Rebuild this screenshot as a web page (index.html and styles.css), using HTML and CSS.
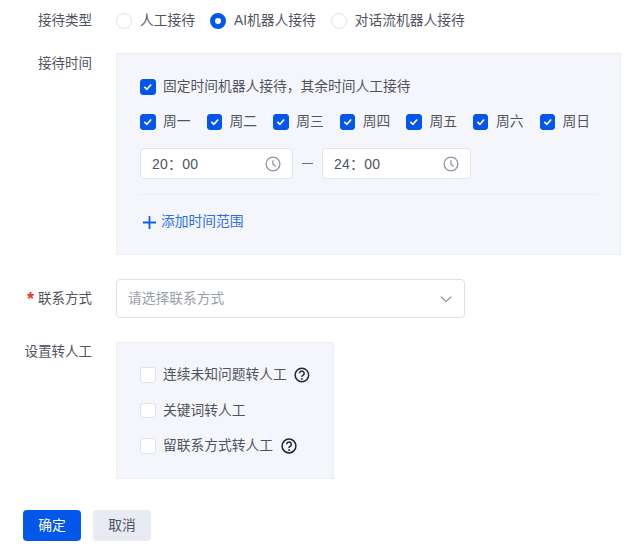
FILE: index.html
```html
<!DOCTYPE html>
<html lang="zh">
<head>
<meta charset="utf-8">
<title>接待设置</title>
<link rel="stylesheet" href="styles.css">
</head>
<body>
<form class="form">
  <div class="row row-type">
    <div class="label">接待类型</div>
    <div class="radios">
      <span class="opt"><i class="radio"></i>人工接待</span>
      <span class="opt"><i class="radio on"></i>AI机器人接待</span>
      <span class="opt"><i class="radio"></i>对话流机器人接待</span>
    </div>
  </div>
  <div class="row row-time">
    <div class="label">接待时间</div>
    <div class="panel panel-time">
      <span class="opt"><i class="check on"><svg viewBox="0 0 16 16"><path d="M4 8.2l3 2.8 5-5.6"/></svg></i>固定时间机器人接待，其余时间人工接待</span>
      <div class="days">
        <span class="opt"><i class="check on"><svg viewBox="0 0 16 16"><path d="M4 8.2l3 2.8 5-5.6"/></svg></i>周一</span>
        <span class="opt"><i class="check on"><svg viewBox="0 0 16 16"><path d="M4 8.2l3 2.8 5-5.6"/></svg></i>周二</span>
        <span class="opt"><i class="check on"><svg viewBox="0 0 16 16"><path d="M4 8.2l3 2.8 5-5.6"/></svg></i>周三</span>
        <span class="opt"><i class="check on"><svg viewBox="0 0 16 16"><path d="M4 8.2l3 2.8 5-5.6"/></svg></i>周四</span>
        <span class="opt"><i class="check on"><svg viewBox="0 0 16 16"><path d="M4 8.2l3 2.8 5-5.6"/></svg></i>周五</span>
        <span class="opt"><i class="check on"><svg viewBox="0 0 16 16"><path d="M4 8.2l3 2.8 5-5.6"/></svg></i>周六</span>
        <span class="opt"><i class="check on"><svg viewBox="0 0 16 16"><path d="M4 8.2l3 2.8 5-5.6"/></svg></i>周日</span>
      </div>
      <div class="times">
        <div class="time time-a"><span>20：00</span><svg class="clock" viewBox="0 0 16 16"><circle cx="8" cy="8" r="6.9"/><path d="M8 4.2V8.2l2.6 2.4"/></svg></div>
        <span class="dash"></span>
        <div class="time time-b"><span>24：00</span><svg class="clock" viewBox="0 0 16 16"><circle cx="8" cy="8" r="6.9"/><path d="M8 4.2V8.2l2.6 2.4"/></svg></div>
      </div>
      <div class="divider"></div>
      <div class="add"><svg viewBox="0 0 16 16"><path d="M8 1v14M1 8h14"/></svg>添加时间范围</div>
    </div>
  </div>
  <div class="row row-contact">
    <div class="label"><em>*</em>联系方式</div>
    <div class="select"><span>请选择联系方式</span><svg viewBox="0 0 12 12"><path d="M.8 3.6L6 8.6l5.2-5"/></svg></div>
  </div>
  <div class="row row-transfer">
    <div class="label">设置转人工</div>
    <div class="panel panel-transfer">
      <span class="opt"><i class="check"></i>连续未知问题转人工<svg class="help" viewBox="0 0 16 16"><circle cx="8" cy="8" r="6.9"/><path d="M5.7 6.3a2.3 2.3 0 1 1 3.6 1.9c-.9.5-1.3 1-1.3 1.8"/><circle class="dot" cx="8" cy="12" r=".9"/></svg></span>
      <span class="opt"><i class="check"></i>关键词转人工</span>
      <span class="opt"><i class="check"></i>留联系方式转人工<svg class="help" viewBox="0 0 16 16"><circle cx="8" cy="8" r="6.9"/><path d="M5.7 6.3a2.3 2.3 0 1 1 3.6 1.9c-.9.5-1.3 1-1.3 1.8"/><circle class="dot" cx="8" cy="12" r=".9"/></svg></span>
    </div>
  </div>
  <div class="actions">
    <button type="button" class="btn primary">确定</button>
    <button type="button" class="btn">取消</button>
  </div>
</form>
</body>
</html>
```
FILE: styles.css
```css
* { box-sizing: border-box; }
html, body { margin: 0; padding: 0; background: #fff; }
body {
  font-family: "Helvetica Neue", "Liberation Sans", "Noto Sans CJK SC", sans-serif;
  font-size: 13.75px;
  line-height: 20px;
  color: #50545e;
  width: 632px;
  height: 557px;
  overflow: hidden;
}
.form { padding-top: 11px; }
.row { display: flex; gap: 24px; }
.label { width: 92px; flex: none; text-align: right; color: #50545e; white-space: nowrap; font-size: 13.5px; }
.label em { color: #e8352e; font-style: normal; font-weight: 700; font-size: 18px; line-height: 16px; margin-right: 4px; vertical-align: -2px; }
.opt { display: flex; align-items: center; white-space: nowrap; }
.radios { display: flex; gap: 15px; }
.radio {
  width: 16px; height: 16px; border-radius: 50%; margin-right: 8px; flex: none;
  border: 1px solid #dfe3ef; background: #fff;
}
.radio.on { border: 5px solid #0256ea; }
.row-time { margin-top: 22px; }
.row-time .label { padding-top: 1px; }
.panel { background: #f5f6fb; border: 1px solid #ebedf5; }
.panel-time { width: 505px; height: 202px; padding: 23px 23px 0; display: flex; flex-direction: column; }
.check {
  width: 15.5px; height: 15.5px; border-radius: 3px; margin-right: 7.5px; flex: none;
  border: 1px solid #dfe3ef; background: #fff; display: flex;
}
.check.on { background: #0256ea; border-color: #0256ea; }
.check svg { width: 100%; height: 100%; fill: none; stroke: #fff; stroke-width: 2; }
.days { display: flex; margin-top: 15px; }
.days .opt { flex: none; width: 66.6px; }
.times { display: flex; align-items: center; margin-top: 16px; }
.time {
  height: 31px; background: #fff; border: 1px solid #e2e5ef; border-radius: 4px;
  padding: 0 11px; display: flex; align-items: center; justify-content: space-between;
  font-size: 14px; letter-spacing: .2px;
}
.time-a { width: 153px; }
.time-b { width: 149px; }
.clock { width: 16px; height: 16px; margin-right: 0; fill: none; stroke: #8d92a0; stroke-width: 1.3; }
.dash { width: 11px; height: 1.5px; background: #6b707c; margin: 0 9px 0 9px; }
.divider { height: 1px; background: #ecedf3; margin-top: 15px; width: 458px; }
.add { display: flex; align-items: center; margin-top: 17px; color: #2a6de8; }
.add svg { width: 15px; height: 15px; margin: 0 4px 0 2px; fill: none; stroke: #0f5feb; stroke-width: 1.9; }
.row-contact { margin-top: 24px; }
.row-contact .label { padding-top: 10px; }
.select {
  width: 349px; height: 39px; border: 1px solid #dbe0ee; border-radius: 4px; background: #fff;
  display: flex; align-items: center; justify-content: space-between; padding: 0 12px 0 11px;
  color: #9a9eaa;
}
.select svg { width: 12px; height: 12px; fill: none; stroke: #7f8491; stroke-width: 1.1; }
.row-transfer { margin-top: 24px; }
.panel-transfer { width: 218px; height: 137px; padding: 22px 23px 0; display: flex; flex-direction: column; gap: 15.5px; }
.help { width: 16px; height: 16px; margin-left: 7.5px; fill: none; stroke: #22252c; stroke-width: 1.5; }
.help .dot { fill: #22252c; stroke: none; }
.actions { display: flex; gap: 12px; margin: 31px 0 0 23px; }
.btn {
  width: 58px; height: 31px; border: 0; border-radius: 4px; font: inherit; padding: 0;
  background: #e9ebf4; color: #50545e;
}
.btn.primary { background: #0256ea; color: #fff; }
```
